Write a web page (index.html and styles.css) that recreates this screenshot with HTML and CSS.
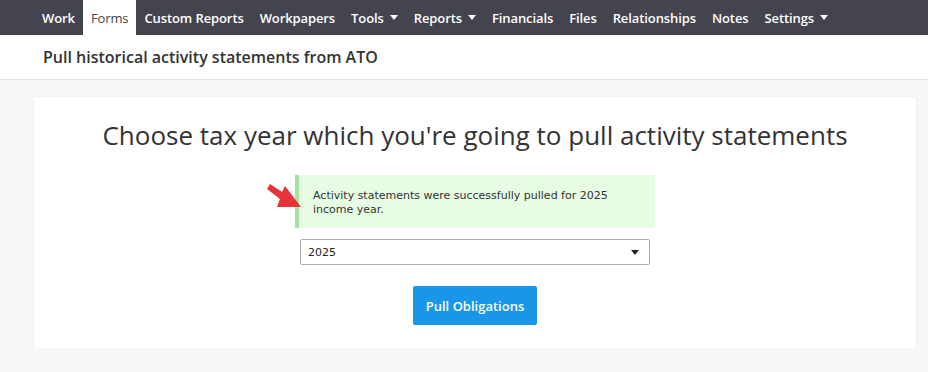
FILE: index.html
```html
<!DOCTYPE html>
<html lang="en">

<head>
  <meta charset="UTF-8">
  <meta name="viewport" content="width=device-width, initial-scale=1.0">
  <title>Pull historical activity statements</title>
  <link rel="stylesheet" href="styles.css">
</head>

<body>
  <nav class="nav">
    <a class="nav__item" href="#">Work</a>
    <a class="nav__item nav__item--active" href="#">Forms</a>
    <a class="nav__item" href="#">Custom Reports</a>
    <a class="nav__item" href="#">Workpapers</a>
    <a class="nav__item nav__item--menu" href="#">Tools</a>
    <a class="nav__item nav__item--menu" href="#">Reports</a>
    <a class="nav__item" href="#">Financials</a>
    <a class="nav__item" href="#">Files</a>
    <a class="nav__item" href="#">Relationships</a>
    <a class="nav__item" href="#">Notes</a>
    <a class="nav__item nav__item--menu" href="#">Settings</a>
  </nav>

  <header class="subheader">
    <h2>Pull historical activity statements from ATO</h2>
  </header>

  <main class="page">
    <section class="card">
      <h1 class="card__title">Choose tax year which you're going to pull activity statements</h1>

      <div class="alert">
        Activity statements were successfully pulled for 2025<br>income year.
        <svg class="alert__arrow" width="40" height="30" viewBox="0 0 40 30">
          <path d="M2 5 L5 0 L17 8 L20 2 L36 23 L12 23 L15 15 Z" fill="#e8333a" />
        </svg>
      </div>

      <div class="select">
        <span>2025</span>
        <span class="select__caret"></span>
      </div>

      <button class="button" type="button">Pull Obligations</button>
    </section>
  </main>
</body>

</html>
```

FILE: styles.css
```css
* {
  box-sizing: border-box;
}

body {
  margin: 0;
  background-color: #f6f7f9;
  color: #333;
  font-family: "Open Sans", sans-serif;
}

.nav {
  display: flex;
  height: 35px;
  padding: 0 34px;
  background-color: #44444f;
}

.nav__item {
  display: flex;
  align-items: center;
  padding: 0 8px;
  color: #fff;
  font-size: 13px;
  font-weight: 600;
  letter-spacing: -0.1px;
  text-decoration: none;
}

.nav__item--active {
  background-color: #fff;
  color: #444;
  font-weight: 400;
}

.nav__item--menu::after {
  content: "";
  margin-left: 6px;
  border-left: 4.5px solid transparent;
  border-right: 4.5px solid transparent;
  border-top: 5px solid #fff;
}

.subheader {
  height: 45px;
  padding: 0 43px;
  border-bottom: 1px solid #e3e4e6;
  background-color: #fff;
  display: flex;
  align-items: center;
}

.subheader h2 {
  margin: 0;
  font-size: 16px;
  font-weight: 600;
  color: #333;
}

.page {
  padding: 17px 12px 0 34px;
}

.card {
  display: flex;
  flex-direction: column;
  align-items: center;
  padding: 23px 0 23px;
  border-radius: 3px;
  background-color: #fff;
  box-shadow: 0 0 3px rgba(0, 0, 0, 0.06);
}

.card__title {
  margin: 0 0 24px;
  font-size: 26px;
  font-weight: 400;
  line-height: 1.2;
  color: #333;
}

.alert {
  position: relative;
  width: 360px;
  padding: 14px 14px 11px 14px;
  border-left: 4px solid #a7e3a0;
  background-color: #e6fde3;
  font-family: "DejaVu Sans", Verdana, sans-serif;
  font-size: 11px;
  line-height: 14px;
  color: #333;
}

.alert__arrow {
  position: absolute;
  left: -34px;
  top: 9px;
}

.select {
  display: flex;
  justify-content: space-between;
  align-items: center;
  width: 350px;
  height: 26px;
  margin-top: 11px;
  padding: 1px 10px 0 7px;
  border: 1px solid #aaa;
  border-radius: 2px;
  font-family: "DejaVu Sans", Verdana, sans-serif;
  font-size: 11px;
  color: #222;
}

.select__caret {
  border-left: 4px solid transparent;
  border-right: 4px solid transparent;
  border-top: 5px solid #222;
}

.button {
  flex: none;
  margin-top: 21px;
  width: 124px;
  height: 39px;
  border: none;
  border-radius: 2px;
  background-color: #1a96e8;
  color: #fff;
  font-family: "Open Sans", sans-serif;
  font-size: 13px;
  font-weight: 600;
}
```
